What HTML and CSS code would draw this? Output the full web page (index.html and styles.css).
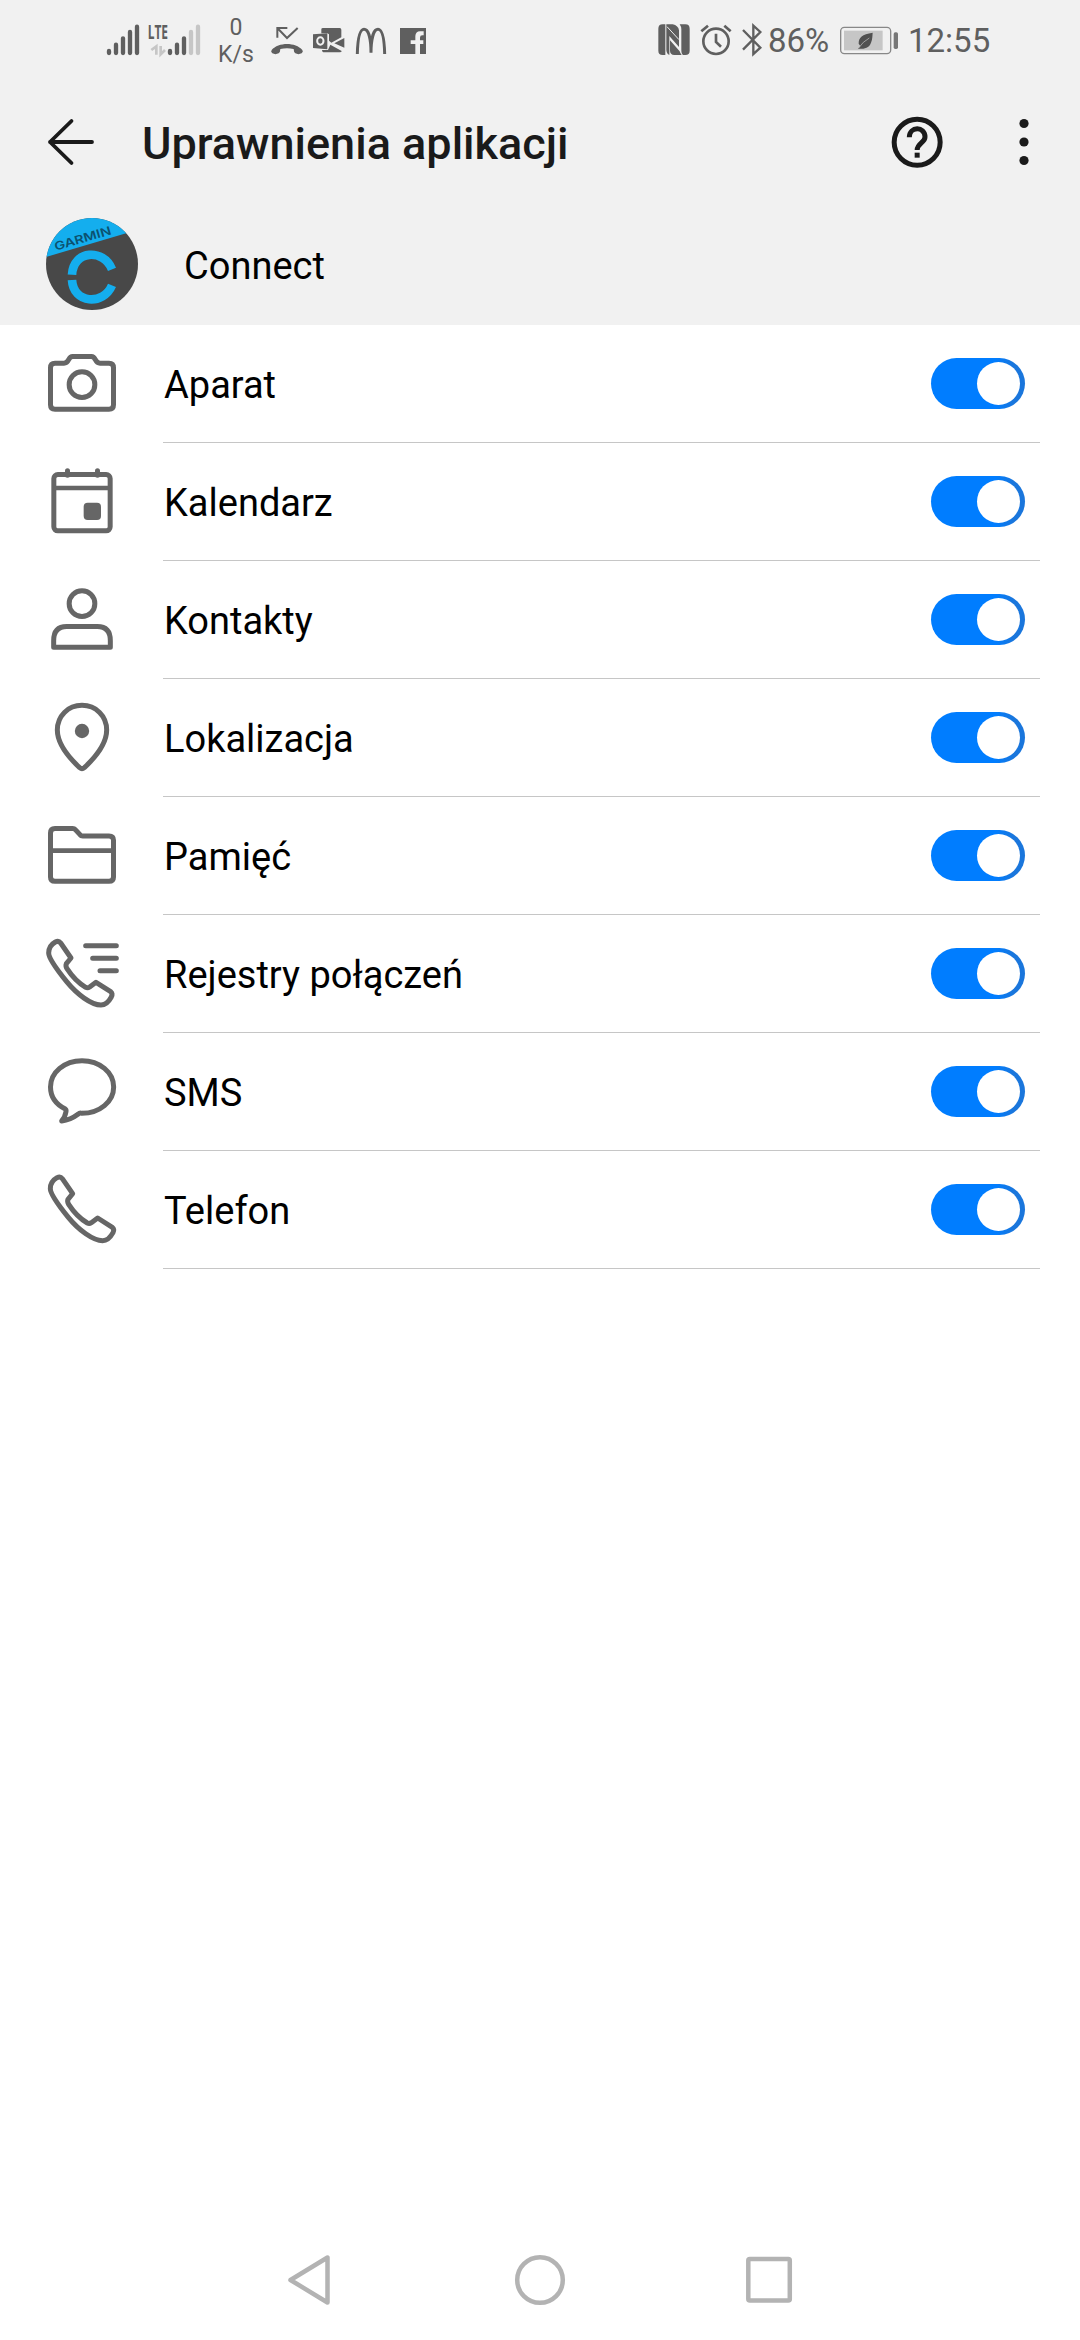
FILE: index.html
```html
<!DOCTYPE html>
<html lang="pl">
<head>
<meta charset="utf-8">
<title>Uprawnienia aplikacji</title>
<link rel="stylesheet" href="styles.css">
</head>
<body>
<div class="screen">
  <div class="top">
    <div class="status">
      <svg class="signal" width="100" height="80" viewBox="42 0 300 240">
        <g stroke="#5f5f5f" stroke-width="13" stroke-linecap="round">
          <path d="M57 153v6M78 134v25M99 115v44M120 96v63M141 80v79M240 153v6M261 134v25M282 115v44"/>
          <path stroke="#c6c6c6" d="M303 96v63M324 80v79"/>
        </g>
        <text class="lte" x="173" y="116" textLength="61" lengthAdjust="spacingAndGlyphs">LTE</text>
        <path d="M184 150L199 139V164M212 138V163L225 150" fill="none" stroke="#c6c6c6" stroke-width="8"/>
      </svg>
      <div class="speed"><span>0</span><span>K/s</span></div>
      <svg class="notices" width="160" height="80" viewBox="534 0 480 240">
        <g fill="none" stroke="#5f5f5f" stroke-width="6">
          <path d="M562 113V84H592M562 84L591 114L623 84"/>
          <path d="M802 162C803 120 809 88 822 88C837 88 843 120 843 158C843 120 850 88 864 88C878 88 883 120 884 162" stroke-width="9"/>
        </g>
        <g fill="#5f5f5f">
          <path d="M545 150C565 126 617 126 637 150Q641 156 635 160Q625 165 616 160Q611 156 611 147Q591 142 571 147Q571 156 566 160Q556 165 547 160Q541 156 545 150Z"/>
          <path d="M694 100V88Q694 84 699 84H749Q754 84 754 89V112L724 128L717 122V103L712 100Z"/>
          <path d="M669 103L712 100V148L669 144Z"/>
          <path d="M763 114V143L733 130ZM696 150H714L721 134L755 153Q755 157 749 157H700Q696 156 696 150Z"/>
          <path d="M930 84H1008V162H990V132H1000V121H990V113Q990 106 997 106H1001V94H990Q977 94 976 108V121H962V132H976V162H930Z"/>
        </g>
        <ellipse cx="691" cy="123" rx="9.500" ry="11" fill="none" stroke="#f1f1f1" stroke-width="6"/>
      </svg>
      <svg class="alerts" width="110" height="80" viewBox="48 0 330 240">
        <path fill="#5f5f5f" d="M68 73H76V165H68Q55 165 55 152V86Q55 73 68 73ZM79 73H98Q115 77 117 91V141L88 108V165Q80 162 79 150ZM123 73H136Q149 73 149 86V152Q149 165 136 165H129Q124 162 124 150V88Q124 80 119 73ZM90 121L119 154Q121 161 125 165H103Q90 164 90 152Z"/>
        <path stroke="#f1f1f1" stroke-width="3" fill="none" d="M81 80L117 119"/>
        <g fill="none" stroke="#5f5f5f" stroke-width="8">
          <circle cx="228" cy="124" r="38"/>
          <path d="M228 101V126L243 140M184 94L204 77M253 77L272 94"/>
          <path d="M309 90L361 143L340 162V77L361 96L309 149" stroke-width="7"/>
        </g>
      </svg>
      <span class="percent">86%</span>
      <svg class="battery" width="60" height="80" viewBox="597 0 180 240">
        <rect x="602" y="82" width="150" height="79" rx="11" fill="none" stroke="#888" stroke-width="4"/>
        <rect x="612" y="92" width="116" height="59" fill="#c6c6c6"/>
        <rect x="761" y="97" width="13" height="50" rx="5" fill="#777"/>
        <path fill="#505050" d="M698 98C666 103 656 112 656 131L661 138L654 146C665 147 687 147 693 128C698 116 697 106 698 98Z"/>
        <path fill="none" stroke="#c6c6c6" stroke-width="2" d="M656 144Q668 125 688 114"/>
      </svg>
      <span class="clock">12:55</span>
    </div>
    <div class="bar">
      <svg class="back" width="50" height="50" viewBox="0 0 50 50"><path d="M25.500 4L4 25L25.500 46M4 25H46" fill="none" stroke="#1a1a1a" stroke-width="3.800" stroke-linecap="round" stroke-linejoin="round"/></svg>
      <h1>Uprawnienia aplikacji</h1>
      <svg class="help" width="52" height="52" viewBox="91 76 156 156">
        <circle cx="169.500" cy="154.500" r="69" fill="none" stroke="#1a1a1a" stroke-width="15"/>
        <path d="M146 140C146 106 193 106 193 139C193 156 170 158 169.500 178" fill="none" stroke="#1a1a1a" stroke-width="15"/>
        <rect x="162" y="186" width="15" height="15" fill="#1a1a1a"/>
      </svg>
      <svg class="more" width="10" height="48" viewBox="0 0 10 48"><g fill="#1a1a1a"><circle cx="5" cy="5.500" r="4.600"/><circle cx="5" cy="24" r="4.600"/><circle cx="5" cy="42.500" r="4.600"/></g></svg>
    </div>
    <div class="app">
      <svg width="92" height="92" viewBox="48 54 276 276">
        <clipPath id="disc"><circle cx="186" cy="192" r="138"/></clipPath>
        <g clip-path="url(#disc)">
          <rect x="48" y="54" width="276" height="276" fill="#484848"/>
          <path d="M48 54H324V89L48 171Z" fill="#14aeee"/>
          <text class="brand" transform="translate(77 152) rotate(-16.500)" textLength="176" lengthAdjust="spacingAndGlyphs">GARMIN</text>
          <path d="M126 224C130 150 220 145 246 208M126 240C130 312 220 317 246 256" fill="none" stroke="#14aeee" stroke-width="26"/>
        </g>
      </svg>
      <span>Connect</span>
    </div>
  </div>

  <ul class="permissions">
    <li><svg class="icon" viewBox="24 -15 264 351"><path d="M75 99.500H102C110 99.500 113 95 116 89Q120 79.500 128 79.500H184Q192 79.500 196 89C199 95 202 99.500 210 99.500H237Q250.500 99.500 250.500 113V224Q250.500 237.500 237 237.500H75Q61.500 237.500 61.500 224V113Q61.500 99.500 75 99.500Z"/><circle cx="156" cy="164" r="38.500"/></svg>
      <div class="row"><span>Aparat</span><i class="toggle"></i></div></li>
    <li><svg class="icon" viewBox="24 339 264 351"><rect x="71.500" y="433.500" width="169" height="169" rx="12"/><path d="M71 474H241" stroke-width="13"/><path d="M112.500 422V436M202.500 422V436" stroke-linecap="round"/><rect class="solid" x="161" y="518" width="52" height="52" rx="12"/></svg>
      <div class="row"><span>Kalendarz</span><i class="toggle"></i></div></li>
    <li><svg class="icon" viewBox="24 3 264 351"><circle cx="156" cy="131" r="38.500"/><path d="M71 262V242Q71 199.500 110 199.500H202Q241 199.500 241 242V262Z"/></svg>
      <div class="row"><span>Kontakty</span><i class="toggle"></i></div></li>
    <li><svg class="icon" viewBox="24 357 264 351"><path d="M156 436C114 436 82 468 82 510C82 554 118 594 149 623Q156 629 163 623C194 594 230 554 230 510C230 468 198 436 156 436Z"/><circle class="solid" cx="156" cy="513" r="21.500"/></svg>
      <div class="row"><span>Lokalizacja</span><i class="toggle"></i></div></li>
    <li><svg class="icon" viewBox="24 -9 264 351"><path d="M75 85.500H128Q133 85.500 136 89L150 104Q153 108 158 108H237Q250.500 108 250.500 121V231Q250.500 244 237 244H75Q61.500 244 61.500 231V99Q61.500 85.500 75 85.500Z"/><path d="M62 152H250" stroke-width="14"/></svg>
      <div class="row"><span>Pamięć</span><i class="toggle"></i></div></li>
    <li><svg class="icon" viewBox="24 345 264 351"><path d="M92 429L123 474L109 491Q106 498 111 506C126 529 145 549 167 562Q173 565 179 561L198 547L242 575Q249 581 244 591Q231 615 213 615C184 615 141 583 110 545C76 503 56 475 56 459C56 439 67 431 76 426Q86 421 92 429Z"/><path d="M167 437.500H259M188 475H259M210 512.500H259" stroke-linecap="round"/></svg>
      <div class="row"><span>Rejestry połączeń</span><i class="toggle"></i></div></li>
    <li><svg class="icon" viewBox="24 9 264 351"><path d="M106 237C78 223 61.500 200 61.500 171C61.500 127 103 92 156 92C209 92 251 127 251 171C251 215 209 250 156 250Q149 248 145 252Q121 270 95 273Q105 262 108 245Q109 239 106 237Z"/></svg>
      <div class="row"><span>SMS</span><i class="toggle"></i></div></li>
    <li><svg class="icon" viewBox="24 363 264 351"><path d="M97 446L128 491L114 508Q111 515 116 523C131 546 150 566 172 579Q178 582 184 578L203 564L247 592Q254 598 249 608Q236 632 218 632C189 632 146 600 115 562C81 520 61 492 61 476C61 456 72 448 81 443Q91 438 97 446Z"/></svg>
      <div class="row"><span>Telefon</span><i class="toggle"></i></div></li>
  </ul>

  <div class="nav">
    <svg width="50" height="56" viewBox="0 0 50 56"><path d="M42.500 5.500V50.500L5.500 28Z"/></svg>
    <svg width="56" height="56" viewBox="0 0 56 56"><circle cx="28" cy="28" r="22.800"/></svg>
    <svg width="50" height="56" viewBox="0 0 50 56"><rect x="4.300" y="7" width="41.500" height="41.500" rx="1.500"/></svg>
  </div>
</div>
</body>
</html>
```
FILE: styles.css
```css
body {
  margin: 0;
  background: #fff;
  font-family: Roboto, "Noto Sans", sans-serif;
}

.screen {
  display: flex;
  flex-direction: column;
  width: 1080px;
  height: 2340px;
}

.top {
  height: 325px;
  background: #f1f1f1;
}

.status {
  display: flex;
  align-items: center;
  height: 80px;
  padding-left: 104px;
  color: #5f5f5f;
  font-size: 33px;
  line-height: 80px;
  white-space: nowrap;
}

.status svg {
  flex: none;
}

.lte {
  font: 700 60px "Open Sans", sans-serif;
  fill: #5f5f5f;
}

.speed {
  display: flex;
  flex-direction: column;
  width: 64px;
  padding-top: 2px;
  font-size: 23px;
  line-height: 27px;
  text-align: center;
}

.alerts {
  margin-left: 228px;
}

.percent {
  width: 61px;
  margin-left: 2px;
  padding-top: 2px;
}

.battery {
  margin-left: 10px;
}

.clock {
  margin-left: 9px;
  padding-top: 2px;
}

.bar {
  display: flex;
  align-items: center;
  height: 124px;
  padding: 0 51px 1px 46px;
}

.bar h1 {
  flex: 1;
  margin: 4px 0 0 46px;
  color: #1a1a1a;
  font-size: 45px;
  font-weight: 500;
  line-height: 60px;
  white-space: nowrap;
}

.more {
  margin-left: 76px;
}

.app {
  display: flex;
  align-items: center;
  height: 92px;
  padding: 13px 0 0 46px;
  color: #000;
  font-size: 38px;
}

.app span {
  margin: 3px 0 0 46px;
}

.brand {
  font: 600 35px Inter, sans-serif;
  fill: #0b5270;
}

.permissions {
  margin: 0;
  padding: 0 40px 0 38px;
  list-style: none;
}

.permissions li {
  display: flex;
  height: 118px;
}

.icon {
  width: 88px;
  height: 117px;
  fill: none;
  stroke: #666;
  stroke-width: 15;
  stroke-linejoin: round;
}

.icon .solid {
  fill: #666;
  stroke: none;
}

.row {
  box-sizing: border-box;
  display: flex;
  flex: 1;
  align-items: center;
  justify-content: space-between;
  margin-left: 37px;
  padding: 0 15px 0 1px;
  border-bottom: 1px solid #c6c6c6;
  color: #000;
  font-size: 38px;
}

.row span {
  padding-top: 2px;
}

.toggle {
  box-sizing: border-box;
  display: flex;
  justify-content: flex-end;
  width: 94px;
  height: 51px;
  padding: 4px 5px;
  border-radius: 26px;
  background: linear-gradient(to right, #007dff 68%, #1a76dc 88%);
}

.toggle::after {
  content: "";
  width: 43px;
  height: 43px;
  border-radius: 50%;
  background: #fff;
}

.nav {
  display: flex;
  align-items: center;
  justify-content: space-between;
  margin-top: auto;
  padding: 0 286px 32px 285px;
}

.nav svg {
  fill: none;
  stroke: #b3b3b3;
  stroke-width: 4.500;
  stroke-linejoin: round;
}
```
